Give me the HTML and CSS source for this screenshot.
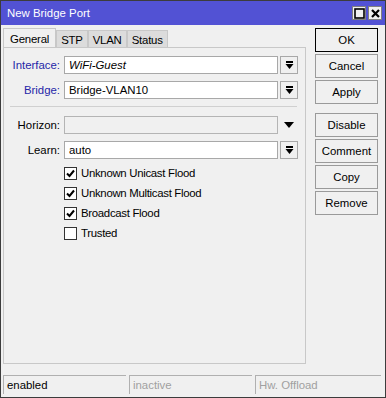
FILE: index.html
```html
<!DOCTYPE html>
<html lang="en">
<head>
    <meta charset="UTF-8">
    <title>New Bridge Port</title>
    <link rel="stylesheet" href="styles.css">
</head>
<body>
    <div class="window">
        <div class="titlebar">
            <span class="title">New Bridge Port</span>
            <span class="title-buttons">
                <span class="tbtn"><svg width="11" height="11" viewBox="0 0 11 11"><rect x="1" y="1" width="9" height="9" fill="none" stroke="#000" stroke-width="1.6"/></svg></span>
                <span class="tbtn"><svg width="11" height="11" viewBox="0 0 11 11"><path d="M2 2 L9 9 M9 2 L2 9" stroke="#000" stroke-width="2.2"/></svg></span>
            </span>
        </div>

        <div class="main">
            <div class="left">
                <div class="tabs">
                    <div class="tab active">General</div>
                    <div class="tab">STP</div>
                    <div class="tab">VLAN</div>
                    <div class="tab">Status</div>
                </div>
                <div class="panel">
                    <div class="row">
                        <label class="blue">Interface:</label>
                        <div class="field italic">WiFi-Guest</div>
                        <div class="drop"><svg width="9" height="9" viewBox="0 0 9 9"><rect x="1" y="0" width="7" height="2" fill="#000"/><path d="M0.5 3 H8.5 L4.5 8 Z" fill="#000"/></svg></div>
                    </div>
                    <div class="row">
                        <label class="blue">Bridge:</label>
                        <div class="field">Bridge-VLAN10</div>
                        <div class="drop"><svg width="9" height="9" viewBox="0 0 9 9"><rect x="1" y="0" width="7" height="2" fill="#000"/><path d="M0.5 3 H8.5 L4.5 8 Z" fill="#000"/></svg></div>
                    </div>
                    <div class="sep"></div>
                    <div class="row">
                        <label>Horizon:</label>
                        <div class="field disabled"></div>
                        <div class="arrow"><svg width="10" height="6" viewBox="0 0 10 6"><path d="M0 0 H10 L5 6 Z" fill="#000"/></svg></div>
                    </div>
                    <div class="row">
                        <label>Learn:</label>
                        <div class="field">auto</div>
                        <div class="drop"><svg width="9" height="9" viewBox="0 0 9 9"><rect x="1" y="0" width="7" height="2" fill="#000"/><path d="M0.5 3 H8.5 L4.5 8 Z" fill="#000"/></svg></div>
                    </div>
                    <div class="checks">
                        <div class="check"><span class="box"><svg width="11" height="11" viewBox="0 0 11 11"><path d="M2 5.5 L4.5 8 L9 2.5" fill="none" stroke="#000" stroke-width="2"/></svg></span>Unknown Unicast Flood</div>
                        <div class="check"><span class="box"><svg width="11" height="11" viewBox="0 0 11 11"><path d="M2 5.5 L4.5 8 L9 2.5" fill="none" stroke="#000" stroke-width="2"/></svg></span>Unknown Multicast Flood</div>
                        <div class="check"><span class="box"><svg width="11" height="11" viewBox="0 0 11 11"><path d="M2 5.5 L4.5 8 L9 2.5" fill="none" stroke="#000" stroke-width="2"/></svg></span>Broadcast Flood</div>
                        <div class="check"><span class="box"></span>Trusted</div>
                    </div>
                </div>
            </div>

            <div class="buttons">
                <button class="default">OK</button>
                <button>Cancel</button>
                <button>Apply</button>
                <button class="gap">Disable</button>
                <button>Comment</button>
                <button>Copy</button>
                <button>Remove</button>
            </div>
        </div>

        <div class="statusbar">
            <div class="cell first">enabled</div>
            <div class="cell second dim">inactive</div>
            <div class="cell dim">Hw. Offload</div>
        </div>
    </div>
</body>
</html>
```

FILE: styles.css
```css
html, body {
    margin: 0;
    padding: 0;
}
body {
    font-family: "Liberation Sans", Arial, sans-serif;
    font-size: 11.4px;
    color: #000;
    background: #fff;
}
.window {
    width: 384px;
    height: 396px;
    border: 1px solid #3c3c3c;
    background: #f0f0f0;
    display: flex;
    flex-direction: column;
}
.titlebar {
    height: 24px;
    background: #5252d4;
    display: flex;
    align-items: center;
    justify-content: space-between;
    padding: 0 3px 0 6px;
}
.title {
    color: #fff;
}
.title-buttons {
    display: flex;
    gap: 2px;
}
.tbtn {
    width: 12px;
    height: 12px;
    background: #f0f0f0;
    border: 1px solid #808080;
    display: flex;
    align-items: center;
    justify-content: center;
}
.main {
    flex: 1;
    display: flex;
    padding: 3px 0 0 2px;
}
.left {
    width: 303px;
    display: flex;
    flex-direction: column;
}
.tabs {
    display: flex;
    height: 20px;
}
.tab {
    padding: 0 4px;
    line-height: 19px;
    background: #dcdcdc;
    border: 1px solid #c8c8c8;
    border-bottom: none;
    margin-top: 2px;
    letter-spacing: -0.2px;
}
.tab.active {
    background: #f0f0f0;
    margin-top: 0;
    line-height: 21px;
    padding: 0 6px;
}
.panel {
    flex: 1;
    border: 1px solid #c8c8c8;
    margin-top: -1px;
    padding: 8px 0 0 0;
    margin-bottom: 11px;
}
.row {
    display: flex;
    align-items: center;
    height: 18px;
    margin-bottom: 7px;
}
.row label {
    width: 56px;
    text-align: right;
    padding-right: 4px;
}
.blue {
    color: #2626a8;
}
.field {
    width: 208px;
    height: 16px;
    line-height: 16px;
    border: 1px solid #a8a8a8;
    background: #fff;
    padding-left: 4px;
}
.field.italic {
    font-style: italic;
}
.field.disabled {
    background: #f0f0f0;
    border-color: #b4b4b4;
}
.drop {
    width: 16px;
    height: 16px;
    margin-left: 2px;
    border: 1px solid #a8a8a8;
    background: #f0f0f0;
    display: flex;
    align-items: center;
    justify-content: center;
}
.arrow {
    width: 18px;
    margin-left: 2px;
    display: flex;
    justify-content: center;
}
.sep {
    height: 1px;
    background: #d0d0d0;
    margin: 1px 8px 9px 6px;
}
.checks {
    padding-left: 60px;
    margin-top: -3px;
}
.check {
    display: flex;
    align-items: center;
    height: 20px;
    letter-spacing: -0.3px;
}
.box {
    width: 11px;
    height: 11px;
    border: 1px solid #333;
    background: #fff;
    margin-right: 4px;
    display: flex;
}
.buttons {
    margin-left: 9px;
    display: flex;
    flex-direction: column;
    gap: 2px;
}
.buttons button {
    width: 63px;
    height: 24px;
    font-family: "Liberation Sans", Arial, sans-serif;
    font-size: 11.4px;
    background: #f0f0f0;
    border: 1px solid #9a9a9a;
    padding: 0;
    color: #000;
}
.buttons button.default {
    border: 1px solid #000;
}
.buttons button.gap {
    margin-top: 7px;
}
.statusbar {
    display: flex;
    gap: 3px;
    padding: 0 4px 3px 2px;
}
.cell {
    flex: 1;
    height: 18px;
    line-height: 18px;
    padding-left: 3px;
    border-top: 1px solid #b0b0b0;
    border-left: 1px solid #b0b0b0;
}
.cell.first,
.cell.second {
    flex: none;
    width: 119px;
}
.cell.dim {
    color: #a0a0a0;
}
```
